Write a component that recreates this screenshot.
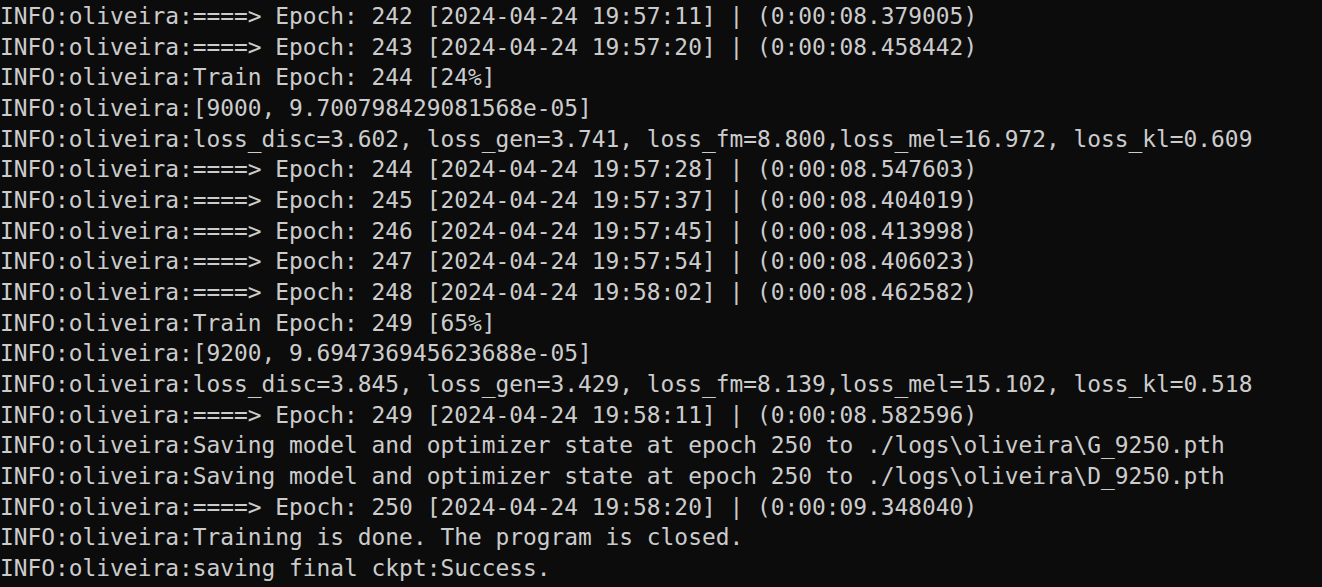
const lines = [
  "INFO:oliveira:====> Epoch: 242 [2024-04-24 19:57:11] | (0:00:08.379005)",
  "INFO:oliveira:====> Epoch: 243 [2024-04-24 19:57:20] | (0:00:08.458442)",
  "INFO:oliveira:Train Epoch: 244 [24%]",
  "INFO:oliveira:[9000, 9.700798429081568e-05]",
  "INFO:oliveira:loss_disc=3.602, loss_gen=3.741, loss_fm=8.800,loss_mel=16.972, loss_kl=0.609",
  "INFO:oliveira:====> Epoch: 244 [2024-04-24 19:57:28] | (0:00:08.547603)",
  "INFO:oliveira:====> Epoch: 245 [2024-04-24 19:57:37] | (0:00:08.404019)",
  "INFO:oliveira:====> Epoch: 246 [2024-04-24 19:57:45] | (0:00:08.413998)",
  "INFO:oliveira:====> Epoch: 247 [2024-04-24 19:57:54] | (0:00:08.406023)",
  "INFO:oliveira:====> Epoch: 248 [2024-04-24 19:58:02] | (0:00:08.462582)",
  "INFO:oliveira:Train Epoch: 249 [65%]",
  "INFO:oliveira:[9200, 9.694736945623688e-05]",
  "INFO:oliveira:loss_disc=3.845, loss_gen=3.429, loss_fm=8.139,loss_mel=15.102, loss_kl=0.518",
  "INFO:oliveira:====> Epoch: 249 [2024-04-24 19:58:11] | (0:00:08.582596)",
  "INFO:oliveira:Saving model and optimizer state at epoch 250 to ./logs\\oliveira\\G_9250.pth",
  "INFO:oliveira:Saving model and optimizer state at epoch 250 to ./logs\\oliveira\\D_9250.pth",
  "INFO:oliveira:====> Epoch: 250 [2024-04-24 19:58:20] | (0:00:09.348040)",
  "INFO:oliveira:Training is done. The program is closed.",
  "INFO:oliveira:saving final ckpt:Success.",
];

export default function App() {
  return (
    <div className="w-[1322px] h-[587px] overflow-hidden bg-[#0c0c0c] text-[#cccccc] pt-px font-['DejaVu_Sans_Mono','Liberation_Mono',monospace] text-[22.86px] leading-[30.67px]">
      {lines.map((line, i) => (
        <div key={i} className="whitespace-pre">{line}</div>
      ))}
    </div>
  );
}
